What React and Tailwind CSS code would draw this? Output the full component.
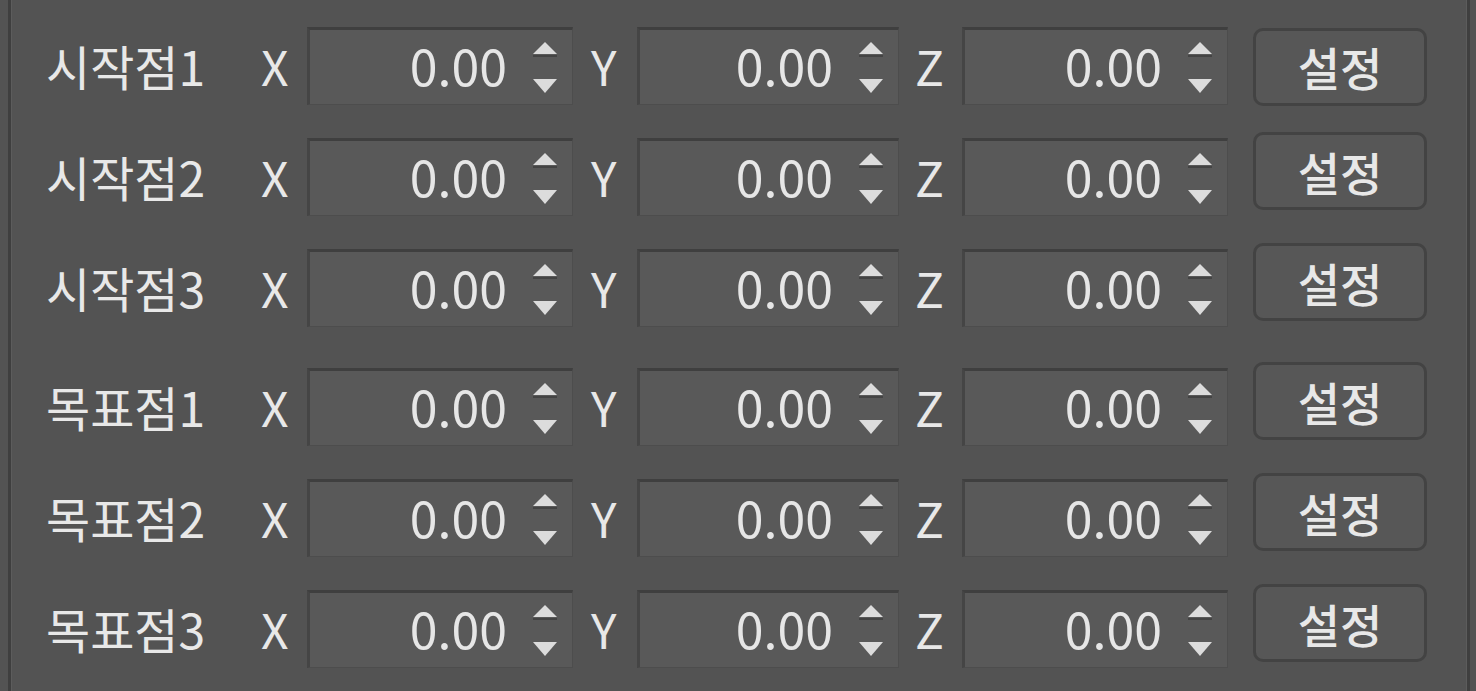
import React from "react";

const rows = [
  ["시작점1", "시작점2", "시작점3"],
  ["목표점1", "목표점2", "목표점3"],
];

function Arrows() {
  return (
    <div className="flex flex-col items-center justify-between h-[54px] w-[28px] pt-[1px]">
      <svg width="26" height="16" viewBox="0 0 26 16">
        <polygon points="13,1 25,13 1,13" fill="#dcdcdc" />
        <line x1="1" y1="15" x2="25" y2="15" stroke="#444" strokeWidth="2" />
      </svg>
      <svg width="26" height="16" viewBox="0 0 26 16">
        <polygon points="1,1 25,1 13,15" fill="#dcdcdc" />
      </svg>
    </div>
  );
}

function SpinBox({ width }) {
  return (
    <div
      className={`${width} h-[78px] flex items-center justify-end gap-[24px] pr-[13px] bg-[#595959] border-t-[3px] border-l-[3px] border-b border-r border-t-[#3f3f3f] border-l-[#454545] border-b-[#4d4d4d] border-r-[#4d4d4d]`}
    >
      <span className="text-[50px] leading-none text-[#e6e6e6] pb-[6px]">0.00</span>
      <Arrows />
    </div>
  );
}

function Row({ label, first }) {
  return (
    <div className="flex items-center h-[111px] pl-[34px]">
      <div className="w-[215px] text-[48px] text-[#e8e8e8] pb-[2px]">{label}</div>
      <div className="w-[46px] text-[48px] text-[#e8e8e8] pb-[2px]">X</div>
      <SpinBox width="w-[266px]" />
      <div className="w-[64px] pl-[18px] text-[48px] text-[#e8e8e8] pb-[2px]">Y</div>
      <SpinBox width="w-[262px]" />
      <div className="w-[63px] pl-[16px] text-[48px] text-[#e8e8e8] pb-[2px]">Z</div>
      <SpinBox width="w-[266px]" />
      <button
        className={`ml-[25px] ${first ? "mt-[2px]" : "mb-[11px]"} w-[174px] h-[78px] rounded-[10px] border-[3px] border-[#434343] bg-[#575757] text-[46px] font-medium text-[#e8e8e8]`}
      >
        설정
      </button>
    </div>
  );
}

export default function App() {
  return (
    <div
      className="w-[1476px] h-[691px] bg-[#535353] overflow-hidden"
      style={{ fontFamily: '"Noto Sans CJK KR", "Noto Sans", sans-serif' }}
    >
      <div className="ml-[8px] w-[1462px] h-full border-l-[3px] border-r-[3px] border-[#3f3f3f]">
        <div className="h-full border-l border-r border-[#5c5c5c] pt-[10px] flex flex-col">
          <div className="flex flex-col">
            {rows[0].map((l, i) => (
              <Row key={l} label={l} first={i === 0} />
            ))}
          </div>
          <div className="flex flex-col mt-[8px]">
            {rows[1].map((l) => (
              <Row key={l} label={l} />
            ))}
          </div>
        </div>
      </div>
    </div>
  );
}
